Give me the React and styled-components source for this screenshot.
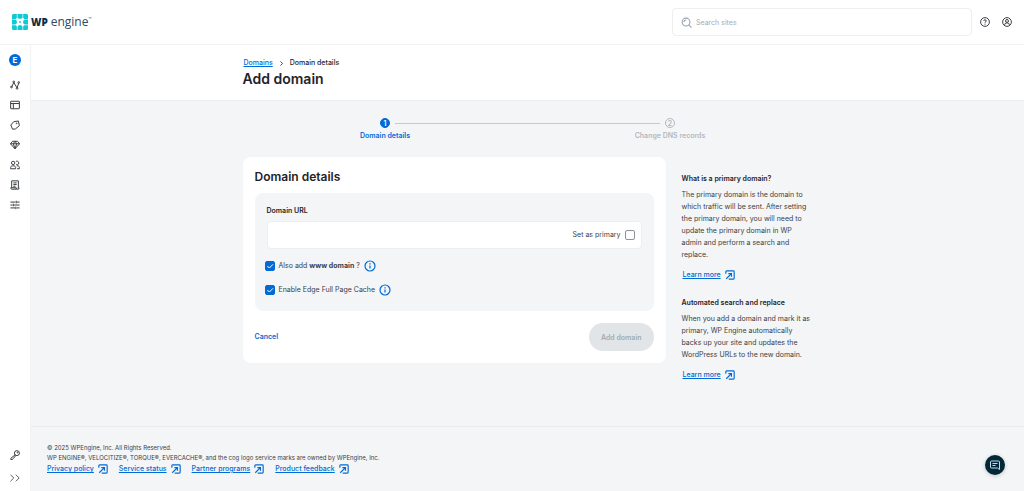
import { useState } from "react"
import styled, { createGlobalStyle } from "styled-components"

const GlobalStyle = createGlobalStyle`
    * {
        box-sizing: border-box;
    }

    body {
        margin: 0;
        background-color: #f4f5f7;
        color: #3a3f44;
        font-family: Inter, "Liberation Sans", sans-serif;
        font-size: 7px;
        line-height: 12px;
    }

    h1, h2, h3, p, ul, ol {
        margin: 0;
        padding: 0;
    }

    ul, ol {
        list-style: none;
    }

    button, input {
        font-family: inherit;
    }
`

const Page = styled.div`
    display: flex;
    flex-direction: column;
    min-height: 100vh;
`

const Header = styled.header`
    display: flex;
    align-items: center;
    justify-content: space-between;
    height: 45px;
    padding: 0 12px;
    background-color: #fff;
    border-bottom: 1px solid #f1f2f4;
`

const Logo = styled.a`
    display: flex;
    align-items: center;
    gap: 3px;
    color: #0c2d48;
    text-decoration: none;
    font-family: "Open Sans", "Noto Sans", sans-serif;
`

const LogoStrong = styled.span`
    font-size: 10px;
    font-weight: 800;
`

const LogoLight = styled.span`
    display: flex;
    align-items: center;
    color: #2c4a63;
    font-size: 12px;
    font-weight: 400;
`

const Trademark = styled.span`
    align-self: flex-start;
    font-size: 4px;
    line-height: 6px;
`

const Tools = styled.div`
    display: flex;
    align-items: center;
    gap: 12px;
`

const SearchBox = styled.label`
    display: flex;
    align-items: center;
    gap: 4px;
    width: 300px;
    height: 28px;
    margin-right: -4px;
    padding: 0 8px;
    color: #97a3b0;
    border: 1px solid #eceef0;
    border-radius: 4px;
`

const SearchInput = styled.input`
    flex: 1;
    min-width: 0;
    padding: 0;
    border: none;
    outline: none;
    background-color: transparent;
    font-size: 7px;

    &::placeholder {
        color: #a6abb0;
    }
`

const IconButton = styled.button`
    display: grid;
    place-items: center;
    padding: 0;
    border: none;
    background-color: transparent;
    color: ${props => props.$color || "#3a3f44"};
    cursor: pointer;
`

const Body = styled.div`
    display: flex;
    flex: 1;
`

const Sidebar = styled.nav`
    display: flex;
    flex-direction: column;
    align-items: center;
    justify-content: space-between;
    width: 31px;
    padding: 9px 0 8px;
    background-color: #fff;
    border-right: 1px solid #f1f2f4;
`

const NavList = styled.ul`
    display: flex;
    flex-direction: column;
    align-items: center;
    gap: ${props => props.$gap};
`

const NavLink = styled.a`
    display: block;
    height: 10px;
    color: #3a3f44;
`

const Account = styled.button`
    display: block;
    width: 12px;
    height: 12px;
    margin-bottom: 4px;
    padding: 0;
    border: none;
    border-radius: 50%;
    background-color: #006bd6;
    color: #fff;
    font-size: 8px;
    font-weight: 700;
    line-height: 12px;
`

const Main = styled.main`
    display: flex;
    flex: 1;
    flex-direction: column;
    min-width: 0;
`

const Container = styled.div`
    width: 100%;
    max-width: 570px;
    margin: 0 auto;
`

const TitleBar = styled.div`
    padding: 12px 0 11px;
    background-color: #fff;
    border-bottom: 1px solid #eceef0;
`

const Breadcrumb = styled.ol`
    display: flex;
    align-items: center;
    gap: 6px;
    padding-left: 1px;
    font-weight: 500;
    color: #1f2429;

    svg {
        display: block;
    }
`

const Link = styled.a`
    color: #006bd6;
    font-size: 7px;
    font-weight: 500;
`

const Title = styled.h1`
    color: #1f2429;
    font-size: 14px;
    font-weight: 600;
    line-height: 20px;
`

const Steps = styled.ol`
    display: flex;
    padding: 17px 0 15px;
`

const Step = styled.li`
    position: relative;
    display: flex;
    flex: 1;
    flex-direction: column;
    align-items: center;
    gap: 2px;
    color: ${props => props.$active ? "#006bd6" : "#b3b9bf"};
    font-weight: 600;

    li + &::before {
        content: "";
        position: absolute;
        top: 5px;
        left: calc(-50% + 10px);
        width: calc(100% - 20px);
        height: 1px;
        background-color: #c5cacf;
    }
`

const StepNumber = styled.span`
    width: 10px;
    height: 10px;
    border: 1px solid currentColor;
    border-radius: 50%;
    line-height: 9px;
    text-align: center;
    background-color: ${props => props.$active ? "#006bd6" : "transparent"};

    span {
        color: ${props => props.$active ? "#fff" : "inherit"};
    }
`

const Columns = styled.div`
    display: flex;
    align-items: flex-start;
    gap: 16px;
    padding-bottom: 24px;
`

const Card = styled.form`
    flex: 1;
    padding: 12px;
    background-color: #fff;
    border-radius: 8px;
`

const CardTitle = styled.h2`
    margin-bottom: 8px;
    color: #1f2429;
    font-size: 12px;
    font-weight: 600;
    line-height: 16px;
`

const Panel = styled.div`
    padding: 12px;
    background-color: #f4f5f7;
    border-radius: 8px;
`

const FieldLabel = styled.label`
    display: block;
    margin-bottom: 4px;
    color: #1f2429;
    font-weight: 600;
`

const Field = styled.div`
    display: flex;
    align-items: center;
    height: 28px;
    margin-bottom: 10px;
    padding: 0 6px;
    background-color: #fff;
    border: 1px solid #eceef0;
    border-radius: 4px;
`

const FieldInput = styled.input`
    flex: 1;
    min-width: 0;
    border: none;
    outline: none;
    background-color: transparent;
    font-size: 7px;
`

const CheckRow = styled.div`
    display: flex;
    align-items: center;
    gap: 4px;
    height: 14px;
    margin: 0 0 10px -2px;

    &:last-child {
        margin-bottom: 2px;
    }
`

const CheckLabel = styled.label`
    display: flex;
    align-items: center;
    gap: 4px;
    cursor: pointer;
`

const CheckBox = styled.span`
    display: grid;
    place-items: center;
    width: 10px;
    height: 10px;
    color: #fff;

    & > * {
        grid-area: 1 / 1;
    }

    svg {
        pointer-events: none;
    }
`

const CheckInput = styled.input`
    appearance: none;
    width: 10px;
    height: 10px;
    margin: 0;
    background-color: #fff;
    border: 1px solid #8a939c;
    border-radius: 2px;

    &:checked {
        background-color: #006bd6;
        border-color: #006bd6;
    }
`

const Actions = styled.div`
    display: flex;
    align-items: center;
    justify-content: space-between;
    margin-top: 12px;
`

const CancelLink = styled.a`
    color: #006bd6;
    font-weight: 600;
    text-decoration: none;
`

const SubmitButton = styled.button`
    height: 28px;
    padding: 0 12px;
    border: none;
    border-radius: 14px;
    background-color: #e1e5e8;
    color: #a2abb3;
    font-size: 7px;
    font-weight: 600;
`

const Aside = styled.aside`
    display: flex;
    flex-direction: column;
    gap: 16px;
    width: 131px;
    padding-top: 16px;
`

const HelpTitle = styled.h3`
    margin-bottom: 4px;
    color: #1f2429;
    font-size: 7px;
    font-weight: 600;
`

const HelpText = styled.p`
    margin-bottom: 8px;
`

const HelpLink = styled.div`
    padding-left: 1px;
`

const OutLink = styled.span`
    display: flex;
    align-items: center;
    gap: 4px;
    color: #006bd6;
`

const Footer = styled.footer`
    margin-top: auto;
    padding: 16px;
    border-top: 1px solid #eaecee;
    font-size: 6px;
    line-height: 10px;
`

const FooterLinks = styled.div`
    display: flex;
    gap: 11px;
    line-height: 12px;
`

const ChatButton = styled.button`
    position: fixed;
    right: 19px;
    bottom: 16px;
    display: grid;
    place-items: center;
    width: 20px;
    height: 20px;
    padding: 0;
    border: none;
    border-radius: 50%;
    background-color: #002838;
    color: #c9d6dd;
    box-shadow: 0 1px 4px rgba(0, 0, 0, .2);
`

const PrimaryLabel = styled.label`
    display: flex;
    align-items: center;
    gap: 4px;
    cursor: pointer;
`

const Icon = ({ size = 10, stroke = 2.4, children }) => (
    <svg
        width={size}
        height={size}
        viewBox="0 0 24 24"
        fill="none"
        stroke="currentColor"
        strokeWidth={stroke}
        aria-hidden="true"
    >
        {children}
    </svg>
)

const LogoMark = () => (
    <svg width="16" height="16" viewBox="0 0 48 48" fill="#0ecad4" aria-hidden="true">
        <path d="M3 0h11.500v12l-3 3H0V3z" />
        <path d="M16.500 0h15v10l-3.500 4.500h-8L16.500 10z" />
        <path d="M33.500 0H45l3 3v12H36.500l-3-3z" />
        <path d="M0 16.500h10l4.500 3.500v8L10 31.500H0z" />
        <circle cx="24" cy="24" r="3" />
        <path d="M48 16.500H38L33.500 20v8l4.500 3.500h10z" />
        <path d="M0 33.500h11.500l3 3V48H3l-3-3z" />
        <path d="M16.500 48V38l3.500-4.500h8l3.500 4.500v10z" />
        <path d="M36.500 33.500H48V45l-3 3H33.500V36.500z" />
    </svg>
)

const navItems = [
    { name: "Activity", icon: <><path d="M4 17L9 6l8 13 4-12" /><circle cx="3.500" cy="17" r="2" /><circle cx="9" cy="4.500" r="2" /><circle cx="17" cy="20" r="2" /><circle cx="21" cy="6" r="2" /></> },
    { name: "Sites", icon: <><rect x="1.500" y="3" width="21" height="18" rx="1" /><path d="M1.500 8.500h21M8 8.500v12" /></> },
    { name: "Tags", icon: <><path d="M2 12l7-8 11-1.500 2.500 11L13 21.500l-7 .5z" /><circle cx="16" cy="8" r="1" /></> },
    { name: "Plans", icon: <path d="M6 3h12l5 6-11 12L1 9zM1 9h22M8 9l4 12 4-12-4-6z" /> },
    { name: "Users", icon: <><circle cx="7.500" cy="7" r="4" /><path d="M14 3.500c2-1.500 7-1 7 3.500 0 4-4 5-6 3.500" /><path d="M1.500 21v-3c0-2 2-4 4-4h4c2 0 4 2 4 4v3zM16 14h3c2 0 3.500 2 3.500 4v3H17" /></> },
    { name: "Billing", icon: <path d="M4 18V2h16v17M8 7h8M8 11h8M8 15h5M2 18.500h13V22H4c-1.500 0-2-1.500-2-3.500zM15 22h5c1.500 0 2-1.500 2-3h-3" /> },
    { name: "Settings", icon: <path d="M1 5h12M17 5h6M15 2v6M1 12h5M10 12h13M8 9v6M1 19h11M16 19h7M14 16v6" /> },
]

const ExternalLink = ({ children }) => (
    <OutLink>
        <Link href="#">{children}</Link>
        <Icon stroke={2.8}>
            <path d="M2 9V4a2 2 0 0 1 2-2h16a2 2 0 0 1 2 2v16a2 2 0 0 1-2 2H9M3 21L15.500 8.500M8 8.500h7.500V16" />
        </Icon>
    </OutLink>
)

const InfoButton = ({ label }) => (
    <IconButton type="button" aria-label={label} $color="#006bd6">
        <Icon size={12}>
            <circle cx="12" cy="12" r="10" />
            <path d="M12 11v6M12 6.500v2.500" />
        </Icon>
    </IconButton>
)

const Check = ({ id, checked, onChange, children }) => (
    <CheckLabel htmlFor={id}>
        <CheckBox>
            <CheckInput
                id={id}
                type="checkbox"
                checked={checked}
                onChange={e => onChange(e.target.checked)}
            />
            <Icon size={8} stroke={3}><path d="M4 12l6 6L21 7" /></Icon>
        </CheckBox>
        <span>{children}</span>
    </CheckLabel>
)

export default function App() {
    const [search, setSearch] = useState("")
    const [domain, setDomain] = useState("")
    const [primary, setPrimary] = useState(false)
    const [www, setWww] = useState(true)
    const [cache, setCache] = useState(true)

    return (
        <Page>
            <GlobalStyle />
            <Header>
                <Logo href="#">
                    <LogoMark />
                    <LogoStrong>WP</LogoStrong>
                    <LogoLight>engine<Trademark>™</Trademark></LogoLight>
                </Logo>
                <Tools>
                    <SearchBox>
                        <Icon size={11}>
                            <circle cx="11" cy="11" r="8.500" />
                            <path d="M17 17l6 6M6.500 11A4.500 4.500 0 0 1 11 6.500" />
                        </Icon>
                        <SearchInput
                            type="search"
                            aria-label="Search sites"
                            placeholder="Search sites"
                            value={search}
                            onChange={e => setSearch(e.target.value)}
                        />
                    </SearchBox>
                    <IconButton type="button" aria-label="Help">
                        <Icon>
                            <circle cx="12" cy="12" r="10.500" />
                            <path d="M9 9.500c0-4 6-4 6 0 0 2-3 2-3 4.500M12 16v2.500" />
                        </Icon>
                    </IconButton>
                    <IconButton type="button" aria-label="Profile">
                        <Icon>
                            <circle cx="12" cy="12" r="10.500" />
                            <circle cx="12" cy="9.500" r="3.500" />
                            <path d="M6.500 20v-2c0-2 1.500-3.500 3.500-3.500h4c2 0 3.500 1.500 3.500 3.500v2" />
                        </Icon>
                    </IconButton>
                </Tools>
            </Header>

            <Body>
                <Sidebar>
                    <NavList $gap="10px">
                        <li><Account type="button">E</Account></li>
                        {navItems.map(item => (
                            <li key={item.name}>
                                <NavLink href="#" aria-label={item.name}><Icon>{item.icon}</Icon></NavLink>
                            </li>
                        ))}
                    </NavList>
                    <NavList $gap="13px">
                        <li>
                            <NavLink href="#" aria-label="Access">
                                <Icon><path d="M12.500 11.500L2 20v3h4l2-3 6-6.500" /><circle cx="16.500" cy="7.500" r="6" /><circle cx="18" cy="6" r="1" /></Icon>
                            </NavLink>
                        </li>
                        <li>
                            <IconButton type="button" aria-label="Expand menu" $color="#55606b">
                                <Icon><path d="M1 4l8 8-8 8M14 4l8 8-8 8" /></Icon>
                            </IconButton>
                        </li>
                    </NavList>
                </Sidebar>

                <Main>
                    <TitleBar>
                        <Container>
                            <Breadcrumb>
                                <li><Link href="#">Domains</Link></li>
                                <li><Icon size={5} stroke={4}><path d="M7 2l10 10L7 22" /></Icon></li>
                                <li>Domain details</li>
                            </Breadcrumb>
                            <Title>Add domain</Title>
                        </Container>
                    </TitleBar>

                    <Container>
                        <Steps>
                            <Step $active>
                                <StepNumber $active><span>1</span></StepNumber>
                                Domain details
                            </Step>
                            <Step>
                                <StepNumber><span>2</span></StepNumber>
                                Change DNS records
                            </Step>
                        </Steps>

                        <Columns>
                            <Card onSubmit={e => e.preventDefault()}>
                                <CardTitle>Domain details</CardTitle>
                                <Panel>
                                    <FieldLabel htmlFor="domain">Domain URL</FieldLabel>
                                    <Field>
                                        <FieldInput
                                            id="domain"
                                            type="text"
                                            value={domain}
                                            onChange={e => setDomain(e.target.value)}
                                        />
                                        <PrimaryLabel htmlFor="primary">
                                            Set as primary
                                            <CheckInput
                                                id="primary"
                                                type="checkbox"
                                                checked={primary}
                                                onChange={e => setPrimary(e.target.checked)}
                                            />
                                        </PrimaryLabel>
                                    </Field>
                                    <CheckRow>
                                        <Check id="www" checked={www} onChange={setWww}>
                                            Also add <b>www domain</b> ?
                                        </Check>
                                        <InfoButton label="About www domain" />
                                    </CheckRow>
                                    <CheckRow>
                                        <Check id="cache" checked={cache} onChange={setCache}>
                                            Enable Edge Full Page Cache
                                        </Check>
                                        <InfoButton label="About Edge Full Page Cache" />
                                    </CheckRow>
                                </Panel>
                                <Actions>
                                    <CancelLink href="#">Cancel</CancelLink>
                                    <SubmitButton type="submit" disabled={!domain}>Add domain</SubmitButton>
                                </Actions>
                            </Card>

                            <Aside>
                                <section>
                                    <HelpTitle>What is a primary domain?</HelpTitle>
                                    <HelpText>
                                        The primary domain is the domain to which traffic will be sent. After
                                        setting the primary domain, you will need to update the primary domain
                                        in WP admin and perform a search and replace.
                                    </HelpText>
                                    <HelpLink><ExternalLink>Learn more</ExternalLink></HelpLink>
                                </section>
                                <section>
                                    <HelpTitle>Automated search and replace</HelpTitle>
                                    <HelpText>
                                        When you add a domain and mark it as primary, WP Engine automatically
                                        backs up your site and updates the WordPress URLs to the new domain.
                                    </HelpText>
                                    <HelpLink><ExternalLink>Learn more</ExternalLink></HelpLink>
                                </section>
                            </Aside>
                        </Columns>
                    </Container>

                    <Footer>
                        <p>© 2025 WPEngine, Inc. All Rights Reserved.</p>
                        <p>
                            WP ENGINE®, VELOCITIZE®, TORQUE®, EVERCACHE®, and the cog logo service marks
                            are owned by WPEngine, Inc.
                        </p>
                        <FooterLinks>
                            <ExternalLink>Privacy policy</ExternalLink>
                            <ExternalLink>Service status</ExternalLink>
                            <ExternalLink>Partner programs</ExternalLink>
                            <ExternalLink>Product feedback</ExternalLink>
                        </FooterLinks>
                    </Footer>
                </Main>
            </Body>

            <ChatButton type="button" aria-label="Chat">
                <Icon size={12} stroke={2}>
                    <path d="M5 4h14a2 2 0 0 1 2 2v15l-4-3H5a2 2 0 0 1-2-2V6a2 2 0 0 1 2-2zM7 9h10M7 13h6" />
                </Icon>
            </ChatButton>
        </Page>
    )
}
